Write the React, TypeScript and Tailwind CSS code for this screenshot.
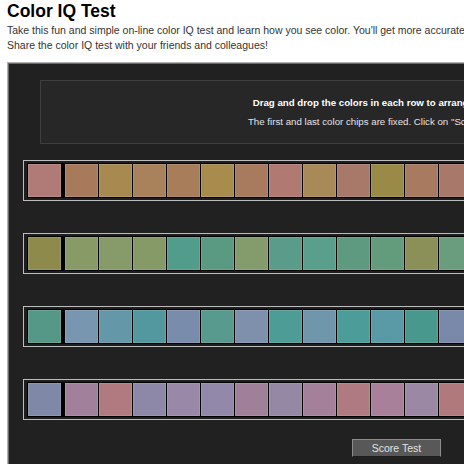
const rows: string[][] = [
  ['#b07a76', '#a87a5c', '#a88a50', '#a8825a', '#a87d5a', '#a88c4e', '#a87a5e', '#b07a72', '#a88a58', '#a87868', '#9a8a48', '#a87a60', '#a8786a', '#a8845a', '#b07a74', '#a88852', '#a87c62', '#9e8a4a', '#a8805c', '#b07872', '#a88656', '#a87a6c'],
  ['#8e8a4c', '#889a66', '#869a6a', '#869a68', '#529c8c', '#5a9a82', '#849c6c', '#5a9c8a', '#5a9e8c', '#5e9a80', '#629c7c', '#8a9058', '#6a9c7e', '#7a9a70', '#569c88', '#8a945e', '#5e9c84', '#749a74', '#52a08c', '#66a080', '#869a62', '#5a9a86'],
  ['#569888', '#7896b0', '#6498a8', '#52989e', '#7a8cac', '#589a8e', '#7e90ac', '#4e9c96', '#7096ac', '#4c9c9a', '#5a9aa6', '#48988e', '#7a88aa', '#6898aa', '#4e9a94', '#7492ae', '#5898a2', '#4c9a98', '#7a8eac', '#6096a8', '#52989c', '#7888aa'],
  ['#8088a8', '#a0809a', '#b07a80', '#8e88a8', '#9a88a8', '#9288aa', '#a08098', '#9488a4', '#a4809a', '#b07a82', '#a8809a', '#9a88a4', '#b07a7c', '#9c84a0', '#a87e92', '#9088a8', '#b07a84', '#a08298', '#9886a6', '#ac7c8c', '#a4809c', '#8e88a8'],
];

const ChipRow: React.FC<{ colors: string[] }> = ({ colors }) => (
  <div className="w-[770px] border border-[#bdbdbd] bg-[#1e1e1e] px-[3px] py-[2px] shrink-0">
    <div className="flex gap-[1px] bg-black p-[1px]">
      {colors.map((c, i) => (
        <div
          key={i}
          className={`w-[33px] h-[33px] shrink-0 shadow-[inset_0_0_0_1px_rgba(255,255,255,0.12)] ${i === 0 ? 'mr-[3px]' : ''} ${i === colors.length - 1 ? 'ml-[3px]' : ''}`}
          style={{ backgroundColor: c }}
        />
      ))}
    </div>
  </div>
);

export default function App() {
  return (
    <div className="w-[464px] h-[464px] overflow-hidden bg-white font-['Liberation_Sans',Arial,sans-serif]">
      <div className="pl-[7px] w-[900px]">
        <h1 className="text-[17.5px] leading-[22px] font-bold text-black">Color IQ Test</h1>
        <p className="text-[10.5px] leading-[14.5px] text-[#333] whitespace-nowrap mt-[1px]">
          Take this fun and simple on-line color IQ test and learn how you see color. You'll get more accurate results if your monitor is calibrated.
          <br />
          Share the color IQ test with your friends and colleagues!
        </p>

        <div className="mt-[10px] w-[802px] border border-[#b0b0b0] bg-[#212121] shadow-[inset_0_0_0_1px_#6a6a6a] p-[1px]">
          <div className="px-[31px] pt-[16px]">
            <div className="h-[64px] border border-[#3e3e3e] bg-[#272727] pt-[16px] text-center">
              <div className="text-[9.7px] leading-[12px] font-bold text-white whitespace-nowrap">
                Drag and drop the colors in each row to arrange them by hue order.
              </div>
              <div className="mt-[7px] text-[9.7px] leading-[12px] text-[#e4e4e4] whitespace-nowrap">
                The first and last color chips are fixed. Click on "Score Test" when finished.
              </div>
            </div>
          </div>

          <div className="flex flex-col gap-[32px] pl-[14px] mt-[16px]">
            {rows.map((r, i) => (
              <ChipRow key={i} colors={r} />
            ))}
          </div>

          <div className="pl-[343px] mt-[19px] pb-[20px]">
            <button className="block w-[89px] h-[18px] bg-[#585858] border border-[#8c8c8c] border-b-[#1c1c1c] text-[10.5px] leading-[16px] text-[#e2e2e2]">
              Score Test
            </button>
          </div>
        </div>
      </div>
    </div>
  );
}
